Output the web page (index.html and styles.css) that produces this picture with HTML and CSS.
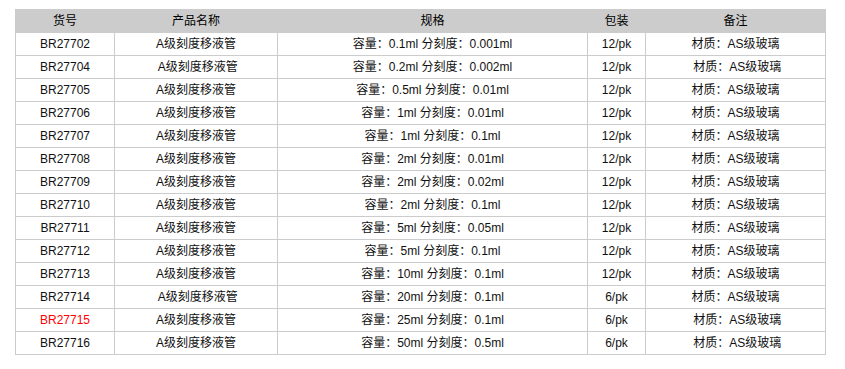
FILE: index.html
```html
<!DOCTYPE html>
<html lang="zh">
<head>
<meta charset="utf-8">
<title>A级刻度移液管</title>
<link rel="stylesheet" href="styles.css">
</head>
<body>
<div class="wrap">
<table class="spec">
<colgroup>
<col class="c1"><col class="c2"><col class="c3"><col class="c4"><col class="c5">
</colgroup>
<thead>
<tr><th>货号</th><th>产品名称</th><th>规格</th><th>包装</th><th>备注</th></tr>
</thead>
<tbody>
<tr><td>BR27702</td><td>A级刻度移液管</td><td>容量：0.1ml 分刻度：0.001ml</td><td>12/pk</td><td>材质：AS级玻璃</td></tr>
<tr><td>BR27704</td><td>&nbsp;A级刻度移液管</td><td>容量：0.2ml 分刻度：0.002ml</td><td>12/pk</td><td>&nbsp;材质：AS级玻璃</td></tr>
<tr><td>BR27705</td><td>A级刻度移液管</td><td>容量：0.5ml 分刻度：0.01ml</td><td>12/pk</td><td>材质：AS级玻璃</td></tr>
<tr><td>BR27706</td><td>A级刻度移液管</td><td>容量：1ml 分刻度：0.01ml</td><td>12/pk</td><td>材质：AS级玻璃</td></tr>
<tr><td>BR27707</td><td>A级刻度移液管</td><td>容量：1ml 分刻度：0.1ml</td><td>12/pk</td><td>材质：AS级玻璃</td></tr>
<tr><td>BR27708</td><td>A级刻度移液管</td><td>容量：2ml 分刻度：0.01ml</td><td>12/pk</td><td>材质：AS级玻璃</td></tr>
<tr><td>BR27709</td><td>A级刻度移液管</td><td>容量：2ml 分刻度：0.02ml</td><td>12/pk</td><td>材质：AS级玻璃</td></tr>
<tr><td>BR27710</td><td>A级刻度移液管</td><td>容量：2ml 分刻度：0.1ml</td><td>12/pk</td><td>材质：AS级玻璃</td></tr>
<tr><td>BR27711</td><td>A级刻度移液管</td><td>容量：5ml 分刻度：0.05ml</td><td>12/pk</td><td>材质：AS级玻璃</td></tr>
<tr><td>BR27712</td><td>A级刻度移液管</td><td>容量：5ml 分刻度：0.1ml</td><td>12/pk</td><td>材质：AS级玻璃</td></tr>
<tr><td>BR27713</td><td>A级刻度移液管</td><td>容量：10ml 分刻度：0.1ml</td><td>12/pk</td><td>材质：AS级玻璃</td></tr>
<tr><td>BR27714</td><td>&nbsp;A级刻度移液管</td><td>容量：20ml 分刻度：0.1ml</td><td>6/pk</td><td>材质：AS级玻璃</td></tr>
<tr><td class="red">BR27715</td><td>A级刻度移液管</td><td>容量：25ml 分刻度：0.1ml</td><td>6/pk</td><td>&nbsp;材质：AS级玻璃</td></tr>
<tr><td>BR27716</td><td>A级刻度移液管</td><td>容量：50ml 分刻度：0.5ml</td><td>6/pk</td><td>&nbsp;材质：AS级玻璃</td></tr>
</tbody>
</table>
</div>
</body>
</html>
```

FILE: styles.css
```css
html, body {
  margin: 0;
  padding: 0;
  background: #fff;
}
.wrap {
  padding: 9px 0 0 15px;
}
.spec {
  border-collapse: collapse;
  table-layout: fixed;
  width: 810px;
  font-family: "Liberation Sans", "Noto Sans CJK SC", sans-serif;
  font-size: 12px;
  color: #111;
}
.c1 { width: 99px; }
.c2 { width: 163px; }
.c3 { width: 310px; }
.c4 { width: 58px; }
.c5 { width: 180px; }
.spec th,
.spec td {
  border: 1px solid #cccccc;
  height: 22px;
  padding: 0;
  line-height: 22px;
  text-align: center;
  white-space: nowrap;
  box-sizing: border-box;
}
.spec th {
  background: #cccccc;
  font-weight: normal;
  color: #000;
}
.spec td.red {
  color: #ff0000;
}
```
